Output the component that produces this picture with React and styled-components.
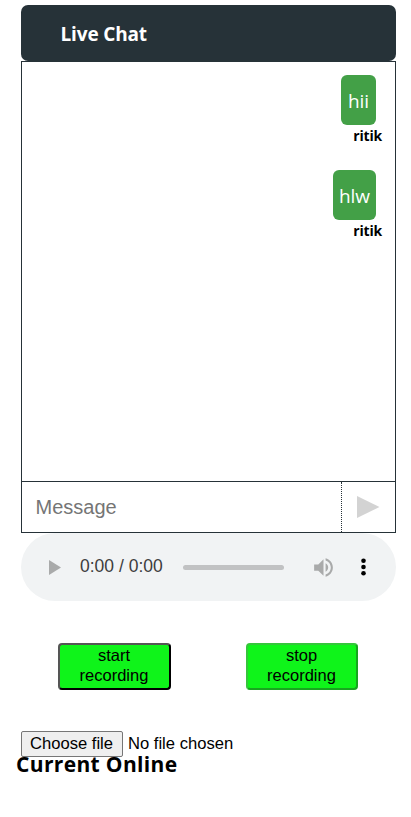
import React from 'react';
import styled, { createGlobalStyle } from 'styled-components';

const GlobalStyle = createGlobalStyle`
  * { box-sizing: border-box; }
  body { margin: 0; background: #fff; color: #000; font-family: "Noto Sans", "Open Sans", sans-serif; }
  button, input { font-family: "Liberation Sans", Arial, sans-serif; }
`;

const Page = styled.main`
  height: 817px;
  overflow: hidden;
  padding: 5px 15px 0 21px;
  display: flex;
  flex-direction: column;
`;

const Header = styled.header`
  flex: none;
  height: 56px;
  padding: 2px 0 0 39.5px;
  display: flex;
  align-items: center;
  border-radius: 7px;
  background: #263238;
`;

const Title = styled.h1`
  margin: 0;
  color: #fff;
  font: 700 19px/28px "Open Sans", sans-serif;
  letter-spacing: -0.15px;
`;

const Messages = styled.section`
  flex: none;
  height: 421px;
  padding: 13px 13px 0 0;
  display: flex;
  flex-direction: column;
  align-items: flex-end;
  gap: 21px;
  border: 1px solid #263238;
  border-bottom: 0;
`;

const Message = styled.article`
  height: 74px;
  display: flex;
  flex-direction: column;
  align-items: flex-end;
`;

const Bubble = styled.div`
  width: ${({ $width }) => $width}px;
  height: 50px;
  margin-right: 6px;
  display: flex;
  align-items: center;
  justify-content: center;
  border-radius: 6px;
  background: #43a047;
  color: #fff;
  font: 400 19px/28px "Open Sans", sans-serif;
  padding-top: 1px;
`;

const Sender = styled.div`
  padding-top: 1px;
  font: 700 14px/20px "Open Sans", sans-serif;
  letter-spacing: -0.2px;
`;

const Composer = styled.form`
  flex: none;
  height: 52px;
  margin-top: -1px;
  display: flex;
  border: 1px solid #263238;
`;

const MessageInput = styled.input`
  width: 319px;
  padding: 0 13.5px;
  border: 0;
  outline: 0;
  background: transparent;
  font-size: 20px;
  &::placeholder { color: #757575; }
`;

const SendButton = styled.button`
  flex: 1;
  padding: 0 1px 0 0;
  display: flex;
  align-items: center;
  justify-content: center;
  border: 0;
  border-left: 1px dotted #263238;
  background: transparent;
`;

const Player = styled.div`
  flex: none;
  height: 68px;
  padding-left: 28px;
  display: flex;
  align-items: center;
  border-radius: 34px;
  background: #f1f3f4;
`;

const PlayerIcon = styled.svg`
  flex: none;
  display: block;
  margin-left: ${({ $left }) => $left || 0}px;
`;

const Time = styled.span`
  width: 83px;
  margin-left: 19px;
  padding-bottom: 2px;
  color: #3c3c3d;
  font: 17.5px/20px "Liberation Sans", Arial, sans-serif;
  white-space: nowrap;
`;

const Track = styled.div`
  width: 101px;
  height: 5px;
  margin-left: 20px;
  border-radius: 3px;
  background: #c1c2c3;
`;

const Actions = styled.div`
  flex: none;
  display: flex;
  gap: 75px;
  padding: 42px 0 0 37px;
`;

const RecordButton = styled.button`
  width: ${({ $width }) => $width}px;
  height: 47px;
  padding: 0 18px 3px 17px;
  border: 2px solid;
  border-color: ${({ $edge }) => $edge};
  border-radius: 4px;
  background: #0ff41a;
  color: #000;
  font-size: 16.5px;
  line-height: 20px;
`;

const FileField = styled.div`
  flex: none;
  height: 26px;
  margin-top: 41px;
  display: flex;
  align-items: center;
  gap: 5px;
  font: 16.6px/20px "Liberation Sans", Arial, sans-serif;
`;

const FileName = styled.span`
  padding-bottom: 1px;
`;

const FileButton = styled.button`
  width: 102px;
  height: 26px;
  padding: 0 1px 1px 0;
  border: 1px solid #767676;
  border-radius: 2px;
  background: #efefef;
  color: #000;
  font-size: 16.6px;
  line-height: 20px;
  white-space: nowrap;
`;

const Online = styled.h2`
  margin: -8px 0 0 -5px;
  font: 700 21px/30px "Open Sans", sans-serif;
  letter-spacing: 0.35px;
  white-space: nowrap;
`;

const messages = [
  { text: 'hii', sender: 'ritik', width: 35 },
  { text: 'hlw', sender: 'ritik', width: 43 },
];

export default function App() {
  return (
    <>
      <GlobalStyle />
      <Page>
        <Header><Title>Live Chat</Title></Header>
        <Messages>
          {messages.map(({ text, sender, width }) => (
            <Message key={text}>
              <Bubble $width={width}>{text}</Bubble>
              <Sender>{sender}</Sender>
            </Message>
          ))}
        </Messages>
        <Composer onSubmit={(event) => event.preventDefault()}>
          <MessageInput placeholder="Message" aria-label="Message" />
          <SendButton aria-label="Send">
            <svg width="23" height="22" viewBox="0 0 23 22"><path d="M0 0L22.5 11L0 22Z" fill="#d3d3d3" /></svg>
          </SendButton>
        </Composer>
        <Player>
          <PlayerIcon width="12" height="15" viewBox="0 0 12 15"><path d="M0 0L12 7.5L0 15Z" fill="#a9aaaa" /></PlayerIcon>
          <Time>0:00 / 0:00</Time>
          <Track />
          <PlayerIcon $left={27} width="25" height="25" viewBox="0 0 24 24">
            <path d="M3 9v6h4l5 5V4L7 9H3zm13.5 3c0-1.77-1.02-3.29-2.5-4.03v8.05c1.48-.73 2.5-2.25 2.5-4.02zM14 3.23v2.06c2.89.86 5 3.54 5 6.71s-2.11 5.85-5 6.71v2.06c4.01-.91 7-4.49 7-8.77s-2.99-7.86-7-8.77z" fill="#a9aaaa" />
          </PlayerIcon>
          <PlayerIcon $left={24} width="7" height="18" viewBox="0 0 7 18">
            <circle cx="3.5" cy="2.7" r="2.3" /><circle cx="3.5" cy="9" r="2.3" /><circle cx="3.5" cy="15.3" r="2.3" />
          </PlayerIcon>
        </Player>
        <Actions>
          <RecordButton $width={113} $edge="#555 #000 #000 #555">start recording</RecordButton>
          <RecordButton $width={112} $edge="#35c63b #18a51f #18a51f #35c63b">stop recording</RecordButton>
        </Actions>
        <FileField>
          <FileButton>Choose file</FileButton>
          <FileName>No file chosen</FileName>
        </FileField>
        <Online>Current Online</Online>
      </Page>
    </>
  );
}
